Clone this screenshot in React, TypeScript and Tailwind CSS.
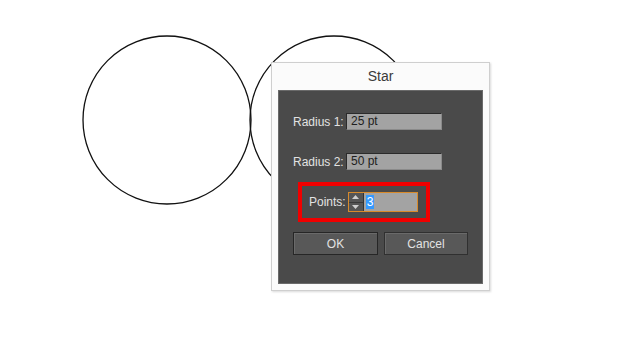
import React from 'react';

const font = { fontFamily: '"Liberation Sans", "DejaVu Sans", sans-serif' };

const Field = ({ label, value }: { label: string; value: string }) => (
    <div className="flex items-center h-[17px]">
        <span className="w-[53px] text-[12px] text-[#e2e2e2]">{label}</span>
        <div className="w-[96px] h-[17px] bg-[#a3a3a3] border border-[#2b2b2b] border-r-[#8a8a8a] border-b-[#8a8a8a] pl-[4px] text-[12px] leading-[15px] text-[#1e1e1e]">
            {value}
        </div>
    </div>
);

const App = () => {
    return (
        <div className="relative w-[640px] h-[360px] bg-white overflow-hidden" style={font}>
            {/* canvas */}
            <svg className="absolute left-0 top-0" width="640" height="360">
                <circle cx="167" cy="120" r="84" fill="none" stroke="#111" strokeWidth="1.3" />
                <circle cx="334" cy="120" r="84" fill="none" stroke="#111" strokeWidth="1.3" />
            </svg>

            {/* Star dialog */}
            <div className="absolute left-[271px] top-[62px] w-[219px] h-[229px] bg-[#fbfbfb] border border-[#cfcfcf] shadow-[1px_1px_2px_rgba(0,0,0,0.15)] flex flex-col">
                <div className="h-[27px] flex items-center justify-center text-[14px] text-[#3a3a3a]">Star</div>
                <div className="mx-[6px] flex-1 mb-[6px] bg-[#4a4a4a] border border-[#6a6a6a] pt-[22px] flex flex-col">
                    <div className="pl-[14px] flex flex-col gap-[23px]">
                        <Field label="Radius 1:" value="25 pt" />
                        <Field label="Radius 2:" value="50 pt" />
                    </div>
                    <div className="ml-[19px] mt-[12px] w-[132px] h-[40px] border-[4px] border-[#f00000] flex items-center pl-[7px]">
                        <span className="text-[12px] text-[#e2e2e2] mr-[2px]">Points:</span>
                        <div className="flex h-[20px] border border-[#d88a2a]">
                            <div className="w-[15px] bg-[#555] border-r border-[#333] flex flex-col">
                                <div className="flex-1 flex items-center justify-center border-b border-[#3a3a3a]">
                                    <svg width="7" height="4" viewBox="0 0 7 4"><path d="M0 4 L3.5 0 L7 4 Z" fill="#cfcfcf" /></svg>
                                </div>
                                <div className="flex-1 flex items-center justify-center">
                                    <svg width="7" height="4" viewBox="0 0 7 4"><path d="M0 0 L3.5 4 L7 0 Z" fill="#cfcfcf" /></svg>
                                </div>
                            </div>
                            <div className="w-[53px] bg-[#a3a3a3] flex items-center pl-[2px]">
                                <span className="bg-[#3399ff] text-white text-[12px] leading-[14px] px-[1px]">3</span>
                            </div>
                        </div>
                    </div>
                    <div className="flex gap-[6px] pl-[14px] mt-[10px]">
                        <button className="w-[85px] h-[23px] bg-[#585858] border border-[#262626] text-[12px] text-[#e2e2e2] shadow-[inset_1px_1px_0_#6a6a6a]">OK</button>
                        <button className="w-[84px] h-[23px] bg-[#585858] border border-[#303030] text-[12px] text-[#e2e2e2] shadow-[inset_1px_1px_0_#6a6a6a]">Cancel</button>
                    </div>
                </div>
            </div>
        </div>
    );
};

export default App;
